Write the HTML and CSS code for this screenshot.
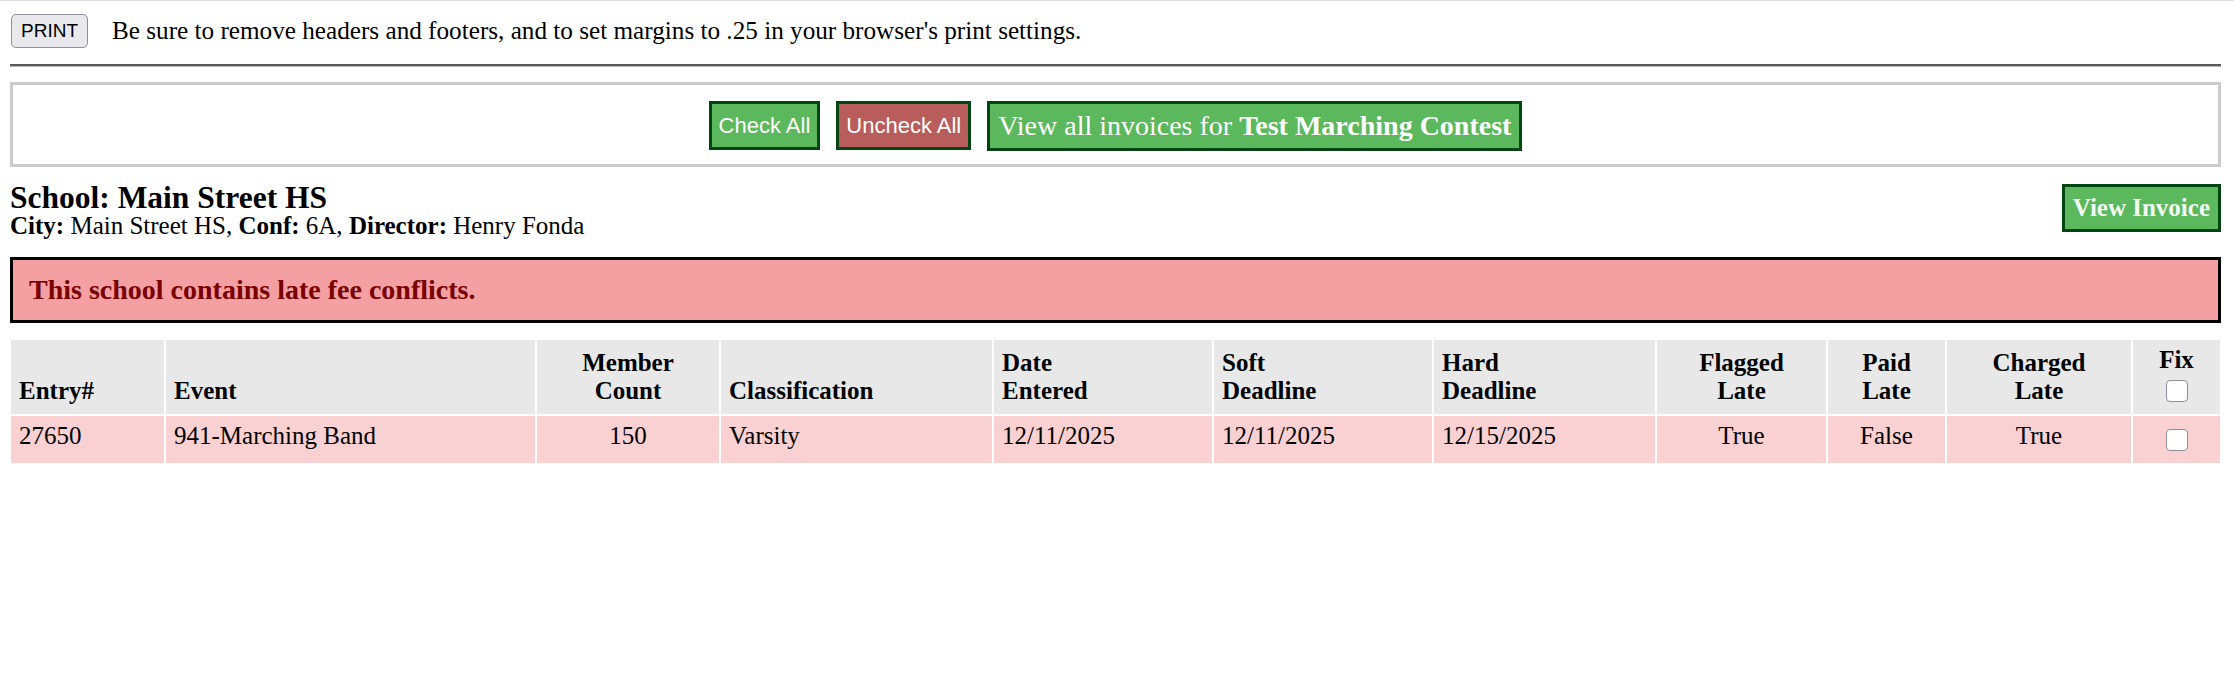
FILE: index.html
```html
<!DOCTYPE html>
<html lang="en">
<head>
    <meta charset="UTF-8">
    <title>Late Fee Conflicts</title>
    <link rel="stylesheet" href="styles.css">
</head>
<body>

    <!-- Print bar -->
    <div class="print-bar">
        <button class="print-btn" onclick="window.print()">PRINT</button>
        <span class="print-note">Be sure to remove headers and footers, and to set margins to .25 in your browser's print settings.</span>
    </div>
    <hr class="rule">

    <!-- Bulk actions -->
    <div class="controls">
        <button class="btn btn-green btn-sans" onclick="setAll(true)">Check All</button>
        <button class="btn btn-red btn-sans" onclick="setAll(false)">Uncheck All</button>
        <button class="btn btn-green btn-wide">View all invoices for <b>Test Marching Contest</b></button>
    </div>

    <!-- School -->
    <div class="school-head">
        <div>
            <h2 class="school-name">School: Main Street HS</h2>
            <div class="school-meta"><b>City:</b> Main Street HS, <b>Conf:</b> 6A, <b>Director:</b> Henry Fonda</div>
        </div>
        <button class="btn btn-green btn-invoice">View Invoice</button>
    </div>

    <div class="alert">This school contains late fee conflicts.</div>

    <table class="entries">
        <colgroup>
            <col style="width:153px">
            <col style="width:369px">
            <col style="width:182px">
            <col style="width:271px">
            <col style="width:218px">
            <col style="width:218px">
            <col style="width:221px">
            <col style="width:169px">
            <col style="width:117px">
            <col style="width:184px">
            <col style="width:87px">
        </colgroup>
        <thead>
            <tr>
                <th>Entry#</th>
                <th>Event</th>
                <th class="center">Member<br>Count</th>
                <th>Classification</th>
                <th>Date<br>Entered</th>
                <th>Soft<br>Deadline</th>
                <th>Hard<br>Deadline</th>
                <th class="center">Flagged<br>Late</th>
                <th class="center">Paid<br>Late</th>
                <th class="center">Charged<br>Late</th>
                <th class="center fix-head">Fix<input type="checkbox" class="fix-box" id="fixAll"></th>
            </tr>
        </thead>
        <tbody>
            <tr class="late">
                <td>27650</td>
                <td>941-Marching Band</td>
                <td class="center">150</td>
                <td>Varsity</td>
                <td>12/11/2025</td>
                <td>12/11/2025</td>
                <td>12/15/2025</td>
                <td class="center">True</td>
                <td class="center">False</td>
                <td class="center">True</td>
                <td class="center fix-cell"><input type="checkbox" class="fix-box row-box"></td>
            </tr>
        </tbody>
    </table>

    <script>
        function setAll(state) {
            document.querySelectorAll(".row-box").forEach(box => {
                box.checked = state;
            });
        };

        document.getElementById("fixAll").addEventListener("change", event => {
            setAll(event.target.checked);
        });
    </script>

</body>
</html>
```

FILE: styles.css
```css
* {
    box-sizing: border-box;
}

body {
    margin: 0;
    padding: 0 13px 0 10px;
    border-top: 1px solid #e0e0e0;
    font-family: "Liberation Serif", "Times New Roman", serif;
    font-size: 25px;
    color: #000;
}

/* Print bar */
.print-bar {
    display: flex;
    align-items: center;
    padding-top: 13px;
}

.print-btn {
    margin-left: 1px;
    padding: 5px 9px;
    font-family: "Liberation Sans", Arial, sans-serif;
    font-size: 19px;
    color: #000;
    background: #e9e9ed;
    border: 1px solid #8f8f9d;
    border-radius: 5px;
    cursor: pointer;
}

.print-note {
    margin-left: 24px;
    font-size: 25.2px;
}

.rule {
    margin: 16px 0 0 0;
    border: none;
    border-top: 2px solid #5a5a5a;
    border-bottom: 1px solid #b8b8b8;
}

/* Bulk actions */
.controls {
    display: flex;
    justify-content: center;
    align-items: flex-start;
    gap: 16px;
    margin-top: 15px;
    padding: 16px 0 13px;
    border: 3px solid #cccccc;
}

.btn {
    font-family: "Liberation Serif", "Times New Roman", serif;
    color: #fff;
    border: 3px solid #004512;
    cursor: pointer;
}

.btn-green {
    background: #5cb85c;
}

.btn-red {
    background: #b95c5c;
}

.btn-sans {
    padding: 9px 7px 8px;
    font-family: "Liberation Sans", Arial, sans-serif;
    font-size: 22px;
}

.btn-wide {
    padding: 6px 8px;
    font-size: 28px;
}

/* School */
.school-head {
    display: flex;
    justify-content: space-between;
    align-items: flex-start;
    margin-top: 15px;
}

.school-name {
    margin: 0;
    font-size: 31.5px;
    line-height: 31px;
}

.school-meta {
    line-height: 26px;
}

.btn-invoice {
    margin-top: 2px;
    padding: 7px 8px;
    font-size: 25px;
    font-weight: bold;
    color: #f3fff3;
}

.alert {
    margin-top: 18px;
    padding: 14px 16px;
    background: #f4a0a2;
    border: 3px solid #000;
    color: #7a0000;
    font-size: 28px;
    font-weight: bold;
}

/* Entries table */
.entries {
    width: 100%;
    margin-top: 15px;
    margin-left: -1px;
    table-layout: fixed;
    border-spacing: 2px;
}

.entries th {
    padding: 9px 8px 9px;
    text-align: left;
    vertical-align: bottom;
    background: #e8e8e8;
}

.entries td {
    padding: 6px 8px 13px;
    vertical-align: top;
}

.entries .late td {
    background: #f9d1d2;
}

.entries .center {
    text-align: center;
}

.entries .fix-head {
    padding-top: 4px;
}

.entries .fix-cell {
    vertical-align: middle;
    padding: 0;
}

.fix-box {
    display: block;
    width: 22px;
    height: 22px;
    margin: 6px auto 3px;
    appearance: none;
    background: #fff;
    border: 1px solid #8f8f9d;
    border-radius: 4px;
}

.row-box {
    margin: 0 auto;
}

.fix-box:checked {
    background: #0075ff;
    border-color: #0075ff;
}
```
